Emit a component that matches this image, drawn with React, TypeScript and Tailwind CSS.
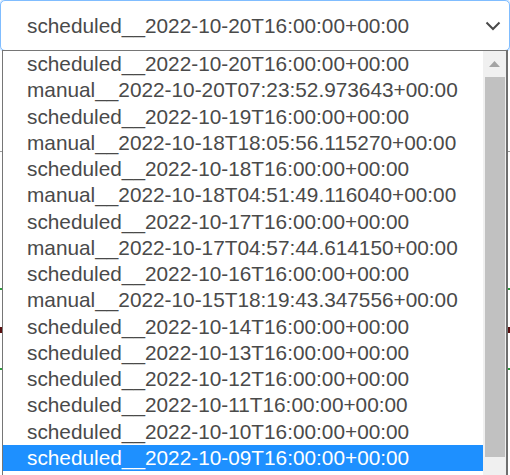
const options = [
  "scheduled__2022-10-20T16:00:00+00:00",
  "manual__2022-10-20T07:23:52.973643+00:00",
  "scheduled__2022-10-19T16:00:00+00:00",
  "manual__2022-10-18T18:05:56.115270+00:00",
  "scheduled__2022-10-18T16:00:00+00:00",
  "manual__2022-10-18T04:51:49.116040+00:00",
  "scheduled__2022-10-17T16:00:00+00:00",
  "manual__2022-10-17T04:57:44.614150+00:00",
  "scheduled__2022-10-16T16:00:00+00:00",
  "manual__2022-10-15T18:19:43.347556+00:00",
  "scheduled__2022-10-14T16:00:00+00:00",
  "scheduled__2022-10-13T16:00:00+00:00",
  "scheduled__2022-10-12T16:00:00+00:00",
  "scheduled__2022-10-11T16:00:00+00:00",
  "scheduled__2022-10-10T16:00:00+00:00",
  "scheduled__2022-10-09T16:00:00+00:00",
];

const selectedIndex = 15;

function Chevron() {
  return (
    <svg width="16" height="10" viewBox="0 0 16 10" fill="none">
      <polyline
        points="1.5,1.5 8,8 14.5,1.5"
        stroke="#4a4a4a"
        strokeWidth="2"
      />
    </svg>
  );
}

export default function App() {
  return (
    <div
      className="relative h-[475px] w-[510px] overflow-hidden bg-white text-[#4a4a4a]"
      style={{ fontFamily: '"Liberation Sans", Arial, sans-serif' }}
    >
      {/* the select itself */}
      <div className="flex h-[51px] items-center justify-between rounded-[5px] border border-[#80bdff] bg-white pl-[26px] pr-[8px] text-[20.8px] shadow-[0_0_0_1px_rgba(0,123,255,0.18)]">
        <span>{options[0]}</span>
        <Chevron />
      </div>

      {/* page content peeking behind the open list */}
      <div className="mt-[100px] h-px bg-[#9a9a9a]" />
      <div className="mt-[136px] h-[2px] bg-[#2e9e3e]" />
      <div className="mt-[37px] h-[6px] bg-[#5a1010]" />
      <div className="mt-[35px] h-[2px] bg-[#2e9e3e]" />

      {/* open option list, runs on below the window */}
      <div className="absolute left-[2px] top-[50px] flex h-[460px] w-[506px] border-y border-l border-r-2 border-[#767676] border-r-[#6f6f6f] bg-white">
        <ul className="flex-1 text-[20.8px]">
          {options.map((opt, i) => (
            <li
              key={opt}
              className={
                i === selectedIndex
                  ? "h-[26.25px] whitespace-nowrap bg-[#1e90ff] pl-[24px] leading-[26.25px] text-white"
                  : "h-[26.25px] whitespace-nowrap pl-[24px] leading-[26.25px]"
              }
            >
              {opt}
            </li>
          ))}
        </ul>
        <div className="flex w-[23px] flex-col bg-[#f0f0f0]">
          <div className="flex h-[26px] items-center justify-center">
            <svg width="11" height="6" viewBox="0 0 11 6">
              <polygon points="0,6 5.5,0 11,6" fill="#a3a3a3" />
            </svg>
          </div>
          <div className="ml-[2px] mr-px h-[380px] bg-[#c1c1c1]" />
        </div>
      </div>
    </div>
  );
}
